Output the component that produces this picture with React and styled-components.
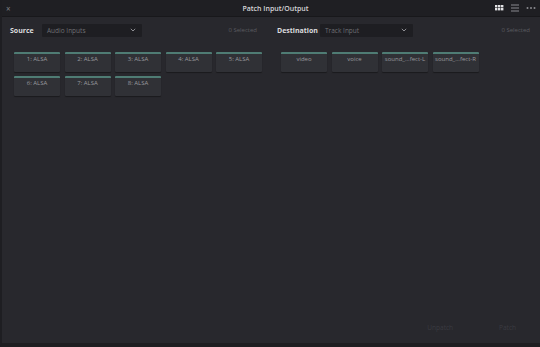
import React from 'react'
import styled, { createGlobalStyle } from 'styled-components'

const GlobalStyle = createGlobalStyle`
  html, body { margin: 0; padding: 0; background: #1a1a1d; }
  body { font-family: "Open Sans", "Liberation Sans", sans-serif; }
`

const Window = styled.div`
  width: 540px;
  height: 347px;
  box-sizing: border-box;
  display: flex;
  flex-direction: column;
  background: #28282d;
  border-left: 2px solid #1e1e22;
  border-bottom: 4px solid #1e1e21;
`

const TitleBar = styled.div`
  height: 16px;
  display: flex;
  align-items: center;
  padding: 0 4px 0 4px;
  background: #1f1f23;
  border-bottom: 1px solid #18181b;
  color: #d6d6d8;
  font-size: 7px;
  font-weight: 600;
`

const Close = styled.span`
  width: 10px;
  color: #77777b;
  font-size: 8px;
`

const Title = styled.div`
  flex: 1;
  text-align: center;
  padding-left: 40px;
`

const TitleIcons = styled.div`
  display: flex;
  align-items: center;
  gap: 7px;
`

const Toolbar = styled.div`
  display: flex;
  align-items: center;
  height: 14px;
  margin-top: 6px;
  padding: 0 10px 0 8px;
  font-size: 7px;
`

const Side = styled.div`
  display: flex;
  align-items: center;
  width: ${p => p.$w}px;
`

const Label = styled.span`
  color: #dcdcde;
  font-weight: 700;
  width: ${p => p.$w}px;
`

const Select = styled.div`
  display: flex;
  align-items: center;
  justify-content: space-between;
  width: ${p => p.$w}px;
  height: 13px;
  box-sizing: border-box;
  padding: 0 6px 0 5px;
  background: #1e1e22;
  border-radius: 1px;
  color: #6f6f74;
  font-size: 6.5px;
`

const Count = styled.span`
  margin-left: auto;
  color: #5c5c61;
  font-size: 6px;
`

const Panels = styled.div`
  display: flex;
  gap: 19px;
  padding: 15px 14px 0 12px;
`

const TileGrid = styled.div`
  display: grid;
  grid-template-columns: repeat(${p => p.$cols}, 46px);
  column-gap: 4.5px;
  row-gap: 4px;
  align-content: start;
`

const Tile = styled.div`
  height: 20px;
  box-sizing: border-box;
  background: #303136;
  border-top: 2px solid #4f7c74;
  border-radius: 1px;
  box-shadow: 0 1px 1px rgba(0, 0, 0, 0.35);
  color: #9a9a9f;
  font-size: 6px;
  text-align: center;
  padding-top: 1px;
  white-space: nowrap;
  overflow: hidden;
`

const Footer = styled.div`
  margin-top: auto;
  display: flex;
  justify-content: flex-end;
  gap: 46px;
  padding: 0 24px 11px 0;
  color: #3b3b41;
  font-size: 6.5px;
`

const GridIcon = () => (
  <svg width="9" height="8" viewBox="0 0 9 8">
    {[0, 3, 6].map(x => [0, 3].map(y => (
      <rect key={`${x}-${y}`} x={x} y={y + 1} width="2.4" height="2.4" fill="#e4e4e6" />
    )))}
  </svg>
)

const ListIcon = () => (
  <svg width="8" height="8" viewBox="0 0 8 8">
    {[1, 4, 7].map(y => (
      <rect key={y} x="0" y={y - 0.5} width="8" height="1" fill="#8a8a8f" />
    ))}
  </svg>
)

const MoreIcon = () => (
  <svg width="10" height="8" viewBox="0 0 10 8">
    <circle cx="1.5" cy="4" r="1" fill="#8a8a8f" />
    <circle cx="5" cy="4" r="1" fill="#8a8a8f" />
    <circle cx="8.5" cy="4" r="1" fill="#8a8a8f" />
  </svg>
)

const Chevron = () => (
  <svg width="6" height="4" viewBox="0 0 6 4">
    <path d="M0.8 0.8 L3 3 L5.2 0.8" stroke="#9a9a9f" strokeWidth="0.9" fill="none" />
  </svg>
)

const sources = ['1: ALSA', '2: ALSA', '3: ALSA', '4: ALSA', '5: ALSA', '6: ALSA', '7: ALSA', '8: ALSA']
const destinations = ['video', 'voice', 'sound_...fect-L', 'sound_...fect-R']

export default function App() {
  return (
    <>
      <GlobalStyle />
      <Window>
        <TitleBar>
          <Close>×</Close>
          <Title>Patch Input/Output</Title>
          <TitleIcons>
            <GridIcon />
            <ListIcon />
            <MoreIcon />
          </TitleIcons>
        </TitleBar>
        <Toolbar>
          <Side $w={256}>
            <Label $w={32}>Source</Label>
            <Select $w={100}>Audio Inputs<Chevron /></Select>
            <Count style={{ marginRight: 8 }}>0 Selected</Count>
          </Side>
          <Side $w={254} style={{ paddingLeft: 12 }}>
            <Label $w={43}>Destination</Label>
            <Select $w={93}>Track Input<Chevron /></Select>
            <Count>0 Selected</Count>
          </Side>
        </Toolbar>
        <Panels>
          <TileGrid $cols={5}>
            {sources.map(s => <Tile key={s}>{s}</Tile>)}
          </TileGrid>
          <TileGrid $cols={4}>
            {destinations.map(d => <Tile key={d}>{d}</Tile>)}
          </TileGrid>
        </Panels>
        <Footer>
          <span>Unpatch</span>
          <span>Patch</span>
        </Footer>
      </Window>
    </>
  )
}
